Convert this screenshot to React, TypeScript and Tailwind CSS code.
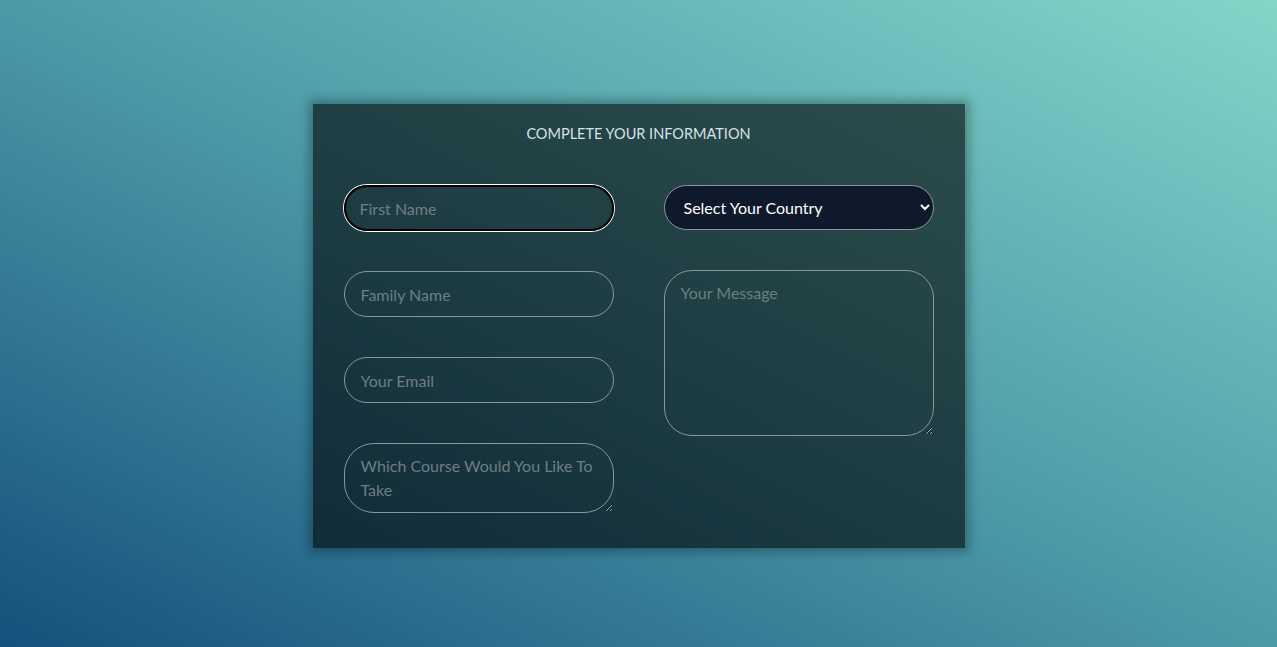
import { FC } from 'react';

const font = { fontFamily: 'Lato, "Noto Sans", sans-serif' };

const fieldBase =
  'w-full rounded-full border border-[#8b9698] bg-transparent px-4 text-base text-white placeholder:text-[#6f7d82] outline-none';

const InfoForm: FC = () => {
  return (
    <form
      className="mt-[5px] flex w-[652px] flex-col bg-black/60 px-[31px] pt-[18px] pb-[35px] shadow-[0_0_10px_4px_rgba(0,0,0,0.3)]"
      onSubmit={e => e.preventDefault()}
    >
      <h1 className="text-center text-[14.5px] leading-6 text-[#d6e2e4]">COMPLETE YOUR INFORMATION</h1>

      <div className="mt-[39px] grid grid-cols-2 gap-x-[50px]">
        {/* left column */}
        <div className="flex flex-col gap-10">
          <input
            type="text"
            placeholder="First Name"
            className="h-[46px] w-full rounded-full border-2 border-black bg-transparent pr-4 pl-[14px] text-base text-white ring-1 ring-white outline-none placeholder:text-[#6f7d82]"
          />
          <input type="text" placeholder="Family Name" className={`${fieldBase} h-[46px]`} />
          <input type="email" placeholder="Your Email" className={`${fieldBase} h-[46px]`} />
          <textarea
            placeholder="Which Course Would You Like To Take"
            className="h-[70px] w-full resize-y rounded-[30px] border border-[#8b9698] bg-transparent px-4 py-[10px] text-base leading-6 text-white outline-none placeholder:text-[#6f7d82]"
          />
        </div>

        {/* right column */}
        <div className="flex flex-col gap-10">
          <select
            defaultValue=""
            className="h-[45px] w-full rounded-full border border-[#8b9698] bg-[#0f192c] pr-2 pl-[15px] text-base text-white outline-none"
          >
            <option value="" disabled>
              Select Your Country
            </option>
            <option>Morocco</option>
            <option>France</option>
            <option>Canada</option>
          </select>
          <textarea
            placeholder="Your Message"
            className="h-[166px] w-full resize-y rounded-[28px] border border-[#8b9698] bg-transparent px-4 py-[10px] text-base leading-6 text-white outline-none placeholder:text-[#6f7d82]"
          />
        </div>
      </div>
    </form>
  );
};

export default function App() {
  return (
    <div
      className="flex h-screen w-full items-center justify-center bg-linear-to-tr from-[#15517b] via-[#4c9aa8] to-[#84d6c8]"
      style={font}
    >
      <InfoForm />
    </div>
  );
}
